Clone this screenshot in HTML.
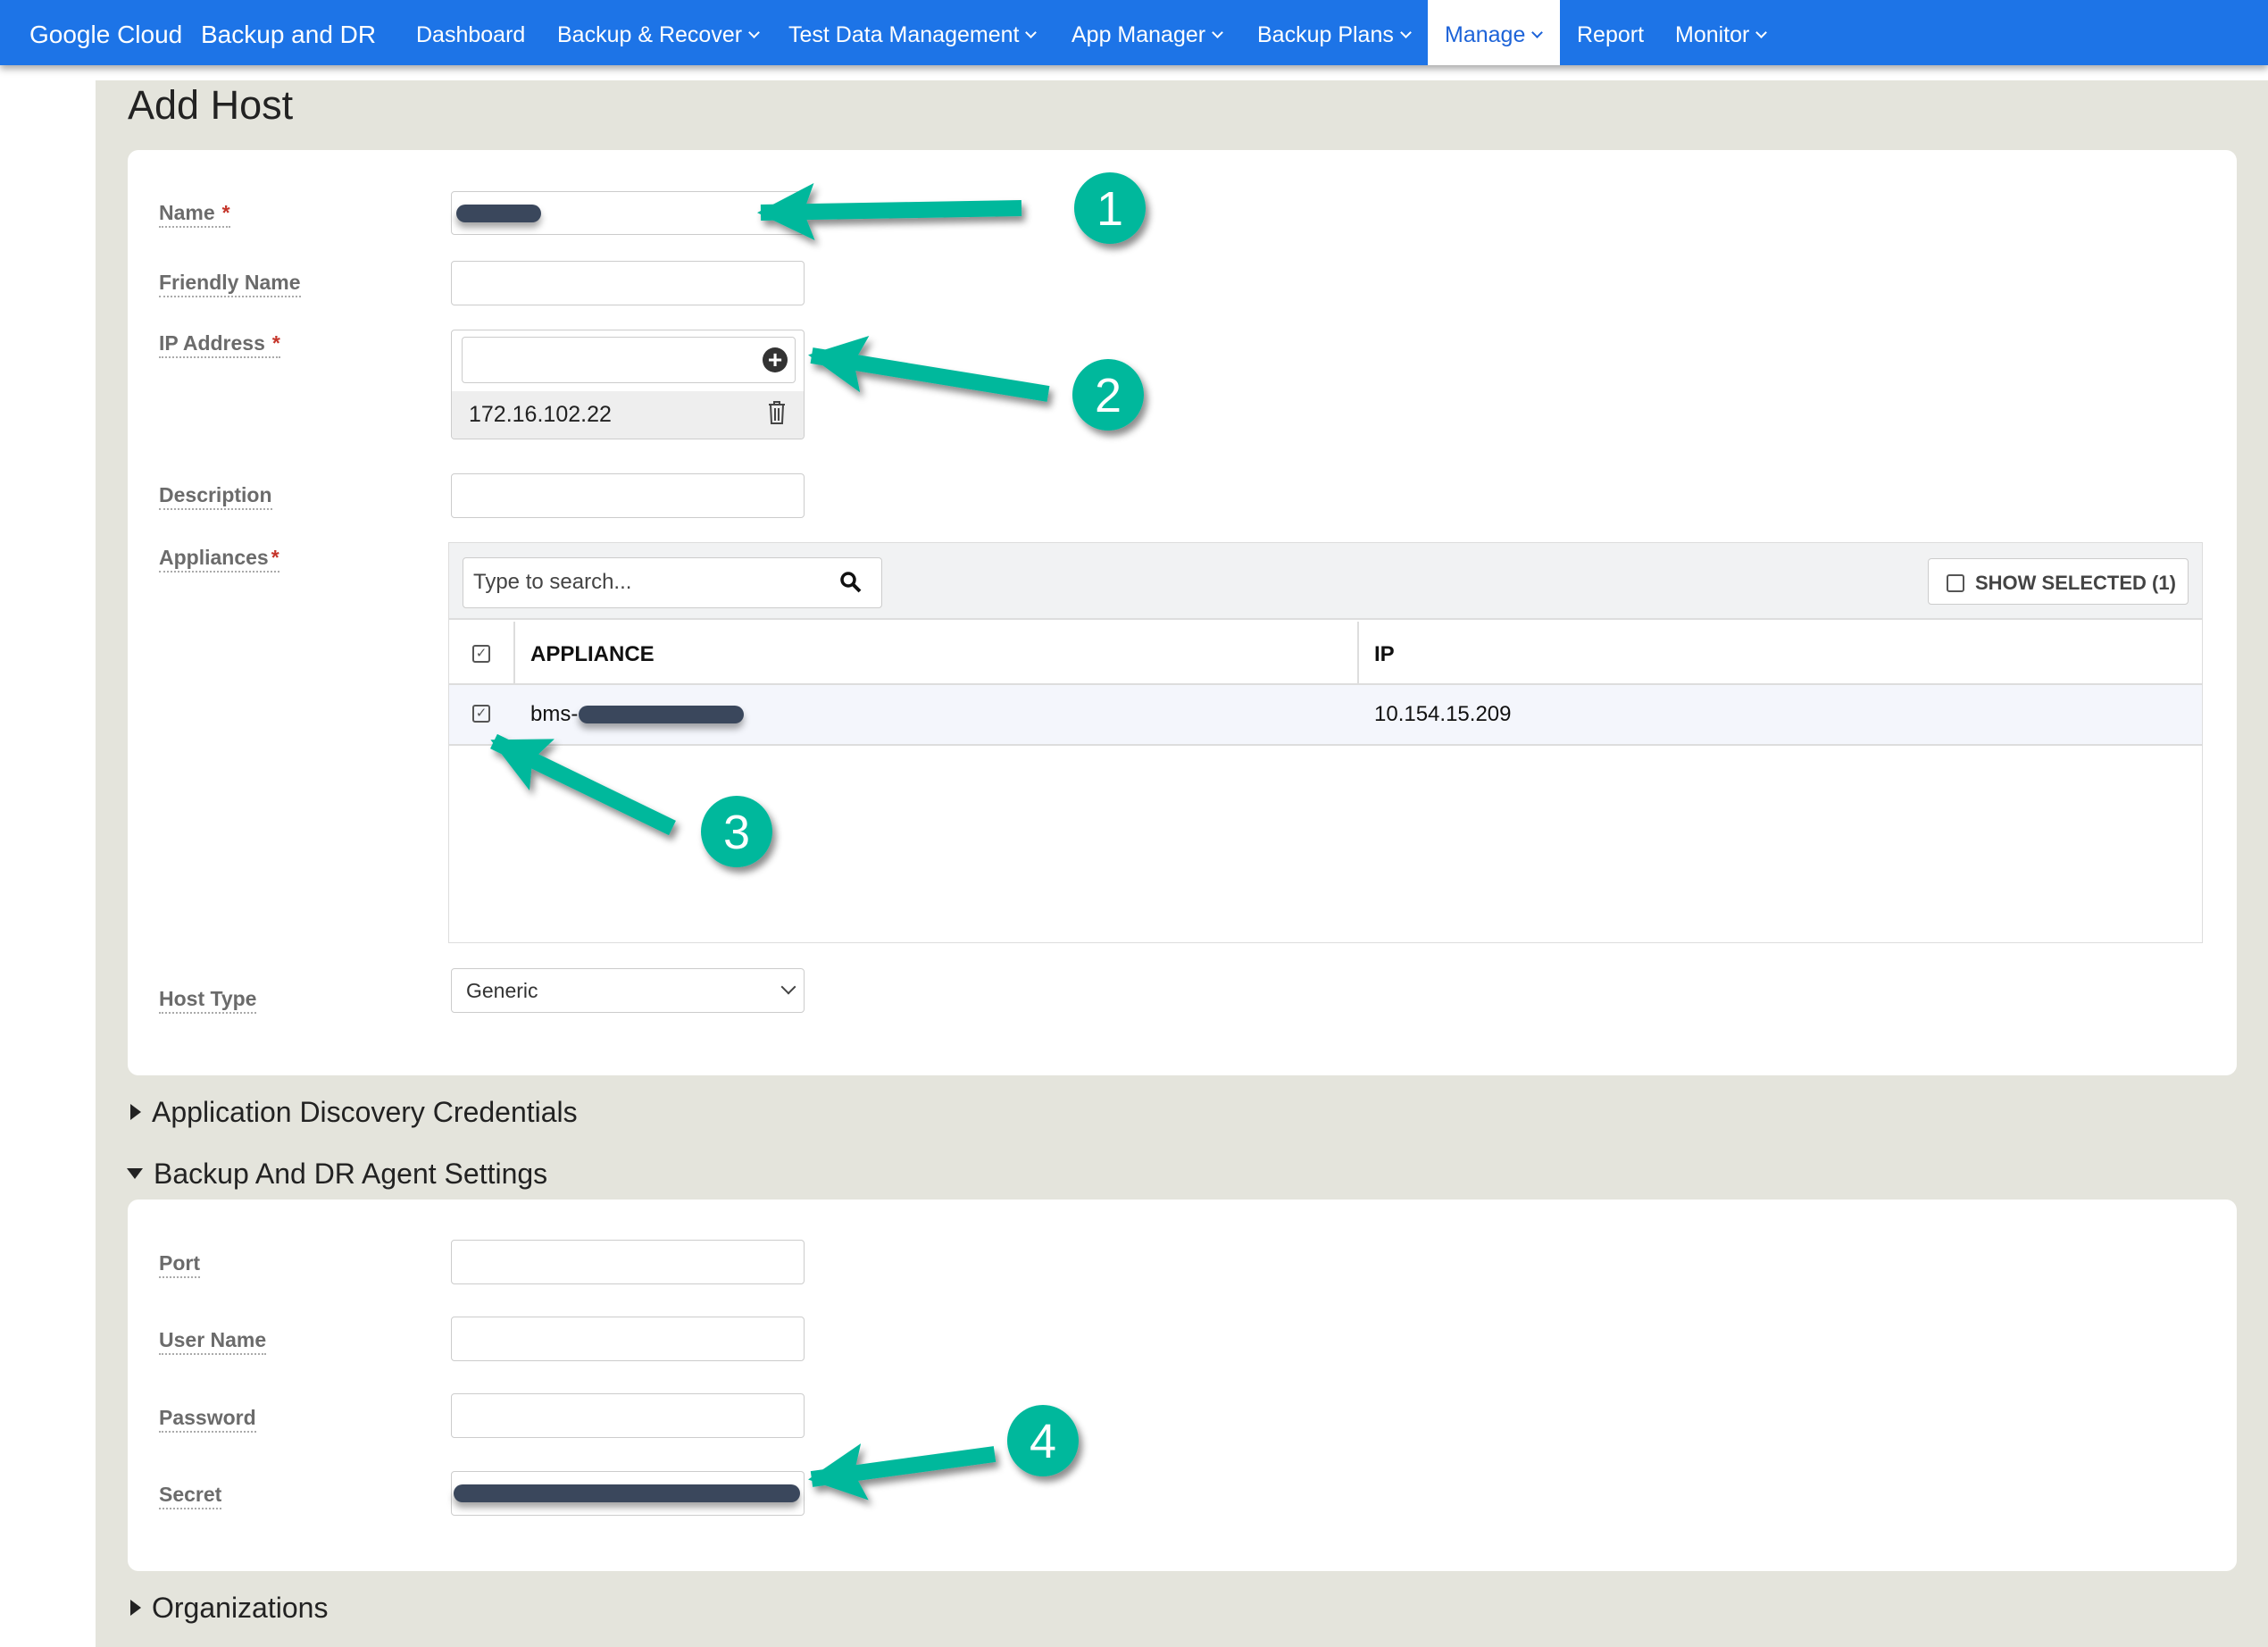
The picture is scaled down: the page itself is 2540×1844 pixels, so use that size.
<!DOCTYPE html>
<html><head><meta charset="utf-8"><style>
*{box-sizing:border-box;margin:0;padding:0}
body{width:2540px;height:1844px;position:relative;overflow:hidden;background:#fff;font-family:"Liberation Sans",Arial,sans-serif;color:#222}
.a{position:absolute}
.nav{left:0;top:0;width:2540px;height:73px;background:#1d74e7;box-shadow:0 4px 8px rgba(0,0,0,.35)}
.nv{position:absolute;top:0;height:73px;line-height:78px;color:#fff;font-size:25px;white-space:nowrap}
.car{display:inline-block;width:9px;height:9px;border-right:2.5px solid currentColor;border-bottom:2.5px solid currentColor;transform:rotate(45deg);margin-left:9px;position:relative;top:-6px}
.gray{left:107px;top:90px;width:2433px;height:1754px;background:#e4e4dc}
.card{background:#fff;border-radius:12px}
.lbl{position:absolute;left:178px;font-size:23px;color:#6b6b6b;border-bottom:2px dotted #aaa;line-height:26px;padding-bottom:2px;font-weight:600}
.req{color:#c5352a;margin-left:8px}
.inp{position:absolute;border:1.5px solid #ccc;border-radius:4px;background:#fff}
.sec{position:absolute;left:146px;font-size:32px;color:#222}
.tri{display:inline-block;width:0;height:0;margin-right:12px;vertical-align:middle;position:relative;top:-3px}
.red{position:absolute;background:#3a475c;border-radius:10px;box-shadow:0 6px 8px rgba(0,0,0,.35)}
.cb{position:absolute;width:20px;height:20px;border:2px solid #555;border-radius:3px;font-size:15px;line-height:16px;text-align:center;color:#555}
</style></head><body>
<div class="a nav"></div>
<div class="nv" style="left:33px;font-size:28px">Google Cloud</div>
<div class="nv" style="left:225px;font-size:28px">Backup and DR</div>
<div class="nv" style="left:466px">Dashboard</div>
<div class="nv" style="left:624px">Backup &amp; Recover<span class="car"></span></div>
<div class="nv" style="left:883px">Test Data Management<span class="car"></span></div>
<div class="nv" style="left:1200px">App Manager<span class="car"></span></div>
<div class="nv" style="left:1408px">Backup Plans<span class="car"></span></div>
<div class="a" style="left:1599px;top:0;width:148px;height:73px;background:#fff"></div>
<div class="nv" style="left:1618px;color:#1d63d8">Manage<span class="car"></span></div>
<div class="nv" style="left:1766px">Report</div>
<div class="nv" style="left:1876px">Monitor<span class="car"></span></div>

<div class="a gray"></div>
<div class="a" style="left:143px;top:90px;font-size:45px;line-height:56px;color:#222">Add Host</div>

<div class="a card" style="left:143px;top:168px;width:2362px;height:1036px"></div>
<div class="lbl" style="top:225px">Name<span class="req">*</span></div>
<div class="lbl" style="top:303px">Friendly Name</div>
<div class="lbl" style="top:371px">IP Address<span class="req">*</span></div>
<div class="lbl" style="top:541px">Description</div>
<div class="lbl" style="top:611px">Appliances<span class="req" style="margin-left:3px">*</span></div>
<div class="lbl" style="top:1105px">Host Type</div>

<div class="inp" style="left:505px;top:214px;width:396px;height:49px"></div>
<div class="red" style="left:511px;top:229px;width:95px;height:20px"></div>
<div class="inp" style="left:505px;top:292px;width:396px;height:50px"></div>
<div class="inp" style="left:505px;top:369px;width:396px;height:123px;overflow:hidden">
 <div class="a" style="left:0;top:68px;width:396px;height:55px;background:#eee"></div>
</div>
<div class="inp" style="left:517px;top:377px;width:374px;height:52px"></div>
<div class="a" style="left:854px;top:389px;width:28px;height:28px;border-radius:50%;background:#333;color:#fff;font-size:28px;line-height:27px;text-align:center;font-weight:bold">+</div>
<div class="a" style="left:525px;top:450px;font-size:25px;color:#222">172.16.102.22</div>
<svg class="a" style="left:860px;top:449px" width="20" height="26" viewBox="0 0 20 26"><path d="M1 4h18M7 4V1h6v3M3 4l1 21h12l1-21M8 8v14M12 8v14" fill="none" stroke="#444" stroke-width="2"/></svg>
<div class="inp" style="left:505px;top:530px;width:396px;height:50px"></div>

<div class="a" style="left:502px;top:607px;width:1965px;height:449px;border:1.5px solid #ddd;background:#fff"></div>
<div class="a" style="left:503px;top:608px;width:1963px;height:86px;background:#f1f2f3;border-bottom:2px solid #ddd"></div>
<div class="inp" style="left:518px;top:624px;width:470px;height:57px"></div>
<div class="a" style="left:530px;top:638px;font-size:24px;color:#444">Type to search...</div>
<svg class="a" style="left:940px;top:639px" width="26" height="26" viewBox="0 0 26 26"><circle cx="10" cy="10" r="7" fill="none" stroke="#111" stroke-width="3.5"/><path d="M15 15l8 8" stroke="#111" stroke-width="4"/></svg>
<div class="inp" style="left:2159px;top:625px;width:292px;height:52px"></div>
<div class="cb" style="left:2180px;top:643px;width:20px;height:20px"></div>
<div class="a" style="left:2212px;top:640px;font-size:22px;color:#444;font-weight:bold">SHOW SELECTED (1)</div>
<div class="a" style="left:575px;top:696px;width:1.5px;height:69px;background:#ddd"></div>
<div class="a" style="left:1520px;top:696px;width:1.5px;height:69px;background:#ddd"></div>
<div class="cb" style="left:529px;top:722px">✓</div>
<div class="a" style="left:594px;top:719px;font-size:24px;font-weight:bold;color:#111">APPLIANCE</div>
<div class="a" style="left:1539px;top:719px;font-size:24px;font-weight:bold;color:#111">IP</div>
<div class="a" style="left:503px;top:765px;width:1963px;height:70px;background:#f4f6fc;border-top:2px solid #ddd;border-bottom:2px solid #ddd"></div>
<div class="cb" style="left:529px;top:789px">✓</div>
<div class="a" style="left:594px;top:786px;font-size:24px;color:#111">bms-</div>
<div class="red" style="left:648px;top:790px;width:185px;height:20px"></div>
<div class="a" style="left:1539px;top:786px;font-size:24px;color:#111">10.154.15.209</div>

<div class="inp" style="left:505px;top:1084px;width:396px;height:50px"></div>
<div class="a" style="left:522px;top:1096px;font-size:23px;color:#333">Generic</div>
<div class="a" style="left:877px;top:1099px;width:12px;height:12px;border-right:2px solid #444;border-bottom:2px solid #444;transform:rotate(45deg)"></div>

<div class="sec" style="top:1227px"><span class="tri" style="border-left:12px solid #222;border-top:9px solid transparent;border-bottom:9px solid transparent"></span>Application Discovery Credentials</div>
<div class="sec" style="top:1296px;left:142px"><span class="tri" style="border-top:12px solid #222;border-left:9px solid transparent;border-right:9px solid transparent"></span>Backup And DR Agent Settings</div>

<div class="a card" style="left:143px;top:1343px;width:2362px;height:416px"></div>
<div class="lbl" style="top:1401px">Port</div>
<div class="lbl" style="top:1487px">User Name</div>
<div class="lbl" style="top:1574px">Password</div>
<div class="lbl" style="top:1660px">Secret</div>
<div class="inp" style="left:505px;top:1388px;width:396px;height:50px"></div>
<div class="inp" style="left:505px;top:1474px;width:396px;height:50px"></div>
<div class="inp" style="left:505px;top:1560px;width:396px;height:50px"></div>
<div class="inp" style="left:505px;top:1647px;width:396px;height:50px"></div>
<div class="red" style="left:508px;top:1662px;width:388px;height:20px"></div>

<div class="sec" style="top:1782px"><span class="tri" style="border-left:12px solid #222;border-top:9px solid transparent;border-bottom:9px solid transparent"></span>Organizations</div>

<svg class="a" style="left:0;top:0" width="2540" height="1844">
<defs>
<marker id="ah" markerWidth="64" markerHeight="64" refX="60" refY="32" orient="auto" markerUnits="userSpaceOnUse"><path d="M0,0 L64,32 L0,64 L12,32 z" fill="#00b89c"/></marker>
<filter id="sh" x="-20%" y="-20%" width="140%" height="160%"><feDropShadow dx="4" dy="6" stdDeviation="4" flood-opacity="0.45"/></filter>
</defs>
<g filter="url(#sh)" fill="#00b89c" stroke="#00b89c">
<line x1="1144" y1="233" x2="852" y2="238" stroke-width="18" marker-end="url(#ah)"/>
<line x1="1174" y1="441" x2="909" y2="398" stroke-width="18" marker-end="url(#ah)"/>
<line x1="753" y1="927" x2="553" y2="830" stroke-width="18" marker-end="url(#ah)"/>
<line x1="1114" y1="1628" x2="909" y2="1656" stroke-width="18" marker-end="url(#ah)"/>
<circle cx="1243" cy="233" r="40" stroke="none"/>
<circle cx="1241" cy="442" r="40" stroke="none"/>
<circle cx="825" cy="931" r="40" stroke="none"/>
<circle cx="1168" cy="1613" r="40" stroke="none"/>
</g>
<g fill="#fff" font-family="Liberation Sans, Arial, sans-serif" font-size="54" text-anchor="middle">
<text x="1243" y="252">1</text><text x="1241" y="461">2</text><text x="825" y="950">3</text><text x="1168" y="1632">4</text>
</g>
</svg>
</body></html>
